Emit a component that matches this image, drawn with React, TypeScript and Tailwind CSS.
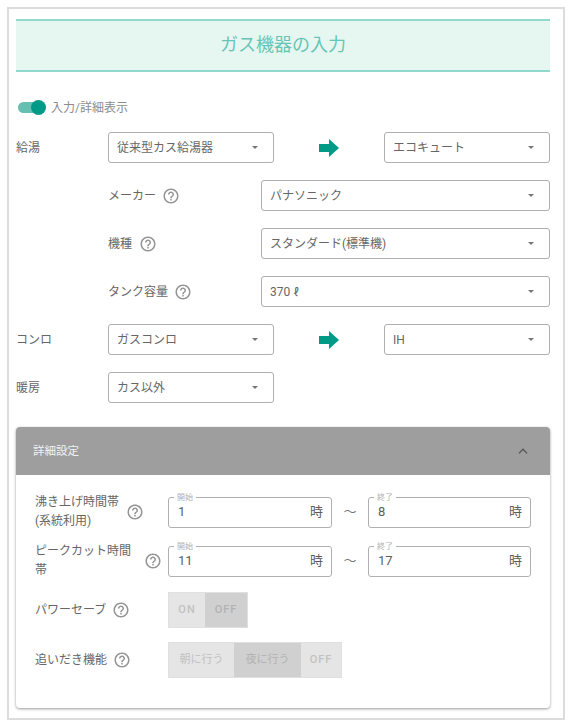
import React from "react";

const FONT = "font-['Roboto','Noto_Sans_CJK_JP',sans-serif]";

function Help() {
  return (
    <svg width="18" height="18" viewBox="0 0 24 24" className="ml-[1px] shrink-0" fill="#949494">
      <path d="M11 18h2v-2h-2v2zm1-16C6.48 2 2 6.48 2 12s4.48 10 10 10 10-4.48 10-10S17.52 2 12 2zm0 18c-4.41 0-8-3.59-8-8s3.59-8 8-8 8 3.59 8 8-3.59 8-8 8zm0-14c-2.21 0-4 1.79-4 4h2c0-1.1.9-2 2-2s2 .9 2 2c0 2-3 1.75-3 5h2c0-2.25 3-2.5 3-5 0-2.21-1.79-4-4-4z" />
    </svg>
  );
}

function Select({ value, className }: { value: string; className: string }) {
  return (
    <div className={`flex h-[31px] items-center justify-between rounded-[3px] border border-[#b0b0b0] bg-white pl-[8px] pr-[15px] text-[12px] text-[#666] ${className}`}>
      <span className="pt-[1px]">{value}</span>
      <span className="h-0 w-0 border-x-[3px] border-t-[3px] border-x-transparent border-t-[#777]" />
    </div>
  );
}

function Arrow() {
  return (
    <svg width="20" height="18" viewBox="0 0 20 18" className="ml-[45px] mr-[45px] shrink-0">
      <polygon points="0,5 10,5 10,0 20,9 10,18 10,13 0,13" fill="#009a87" />
    </svg>
  );
}

function SubRow({ label, value, gap }: { label: string; value: string; gap: string }) {
  return (
    <div className="mt-[17px] flex h-[31px] items-center pl-[92px] first:mt-[16px]">
      <div className="flex w-[153px] shrink-0 items-center text-[12px] text-[#666]">
        <span className={`pt-[1px] ${gap}`}>{label}</span>
        <Help />
      </div>
      <Select value={value} className="w-[289px]" />
    </div>
  );
}

function Field({ legend, value, className }: { legend: string; value: string; className: string }) {
  return (
    <div className={`relative flex h-[31px] items-center justify-between rounded-[3px] border border-[#b0b0b0] bg-white pl-[9px] pr-[8px] text-[13px] text-[#5c5c5c] ${className}`}>
      <span className="absolute left-[5px] top-[-5px] bg-white px-[3px] text-[8px] leading-[9px] text-[#b0b0b0]">{legend}</span>
      <span>{value}</span>
      <span>時</span>
    </div>
  );
}

function TimeRow({ label, width, gap, start, end, className }: { label: React.ReactNode; width: string; gap: string; start: string; end: string; className: string }) {
  return (
    <div className={`flex h-[40px] items-center ${className}`}>
      <div className="flex w-[133px] shrink-0 items-center text-[12px] leading-[19px] text-[#666]">
        <span className={`${width} ${gap}`}>{label}</span>
        <Help />
      </div>
      <Field legend="開始" value={start} className="w-[164px]" />
      <span className="w-[36px] text-center text-[13px] text-[#777]">～</span>
      <Field legend="終了" value={end} className="w-[163px]" />
    </div>
  );
}

function ToggleButton({ label, active, className }: { label: string; active?: boolean; className: string }) {
  return (
    <div className={`flex h-full items-center justify-center text-[11px] ${active ? "bg-[#d0d0d0] text-[#b2b2b2]" : "bg-[#e5e5e5] text-[#c2c2c2]"} ${className}`}>
      {label}
    </div>
  );
}

export default function App() {
  return (
    <div className={`h-[725px] w-[573px] overflow-hidden bg-white pl-[7px] pt-[7px] ${FONT}`}>
      <div className="h-[713px] w-[558px] border-2 border-[#dcdcdc] px-[7px] pt-[10px]">
        <div className="flex h-[53px] w-[534px] items-center justify-center border-y-2 border-[#8fdacd] bg-[#e6f6f1] pb-[3px] text-[18px] text-[#66c5b6]">
          ガス機器の入力
        </div>

        <div className="mt-[28px] flex h-[15px] items-center text-[12px] text-[#8c8c8c]">
          <div className="relative ml-[2px] h-[11px] w-[26px]">
            <div className="h-full w-[22px] rounded-full bg-[#66bfb1]" />
            <div className="absolute right-[-2px] top-[-2px] h-[15px] w-[15px] rounded-full bg-[#009a87]" />
          </div>
          <span className="ml-[7px]">入力/詳細表示</span>
        </div>

        <div className="mt-[17px] flex h-[31px] items-center text-[12px] text-[#666]">
          <span className="w-[92px] pt-[1px]">給湯</span>
          <Select value="従来型カス給湯器" className="w-[166px]" />
          <Arrow />
          <Select value="エコキュート" className="w-[166px]" />
        </div>

        <SubRow label="メーカー" value="パナソニック" gap="mr-[5px]" />
        <SubRow label="機種" value="スタンダード(標準機)" gap="mr-[6px]" />
        <SubRow label="タンク容量" value="370 ℓ" gap="mr-[5px]" />

        <div className="mt-[17px] flex h-[31px] items-center text-[12px] text-[#666]">
          <span className="w-[92px] pt-[1px]">コンロ</span>
          <Select value="ガスコンロ" className="w-[166px]" />
          <Arrow />
          <Select value="IH" className="w-[166px]" />
        </div>

        <div className="mt-[17px] flex h-[31px] items-center text-[12px] text-[#666]">
          <span className="w-[92px] pt-[1px]">暖房</span>
          <Select value="カス以外" className="w-[166px]" />
        </div>

        <div className="mt-[24px] h-[281px] w-[534px] rounded-[4px] bg-white shadow-[0_1px_3px_rgba(0,0,0,0.4)]">
          <div className="flex h-[48px] items-center justify-between rounded-t-[4px] bg-[#9e9e9e] pl-[17px] pr-[20px] text-[11.5px] text-[#f2f2f2]">
            <span className="pt-[1px]">詳細設定</span>
            <svg width="14" height="14" viewBox="0 0 24 24" fill="none" stroke="#555" strokeWidth="2.2">
              <polyline points="5,16 12,9 19,16" />
            </svg>
          </div>
          <div className="pl-[19px] pt-[17px]">
            <TimeRow label={<>沸き上げ時間帯<br />(系統利用)</>} width="w-[84px]" gap="mr-[6px]" start="1" end="8" className="" />
            <TimeRow label="ピークカット時間帯" width="w-[102px]" gap="mr-[6px]" start="11" end="17" className="mt-[9px]" />

            <div className="mt-[11px] flex h-[36px] items-center">
              <div className="flex w-[133px] shrink-0 items-center text-[12px] text-[#666]">
                <span className="mr-[5px]">パワーセーブ</span>
                <Help />
              </div>
              <div className="flex h-full border border-[#e0e0e0]">
                <ToggleButton label="ON" className="w-[36px] font-medium tracking-[1px]" />
                <ToggleButton label="OFF" active className="w-[42px] font-medium tracking-[1px]" />
              </div>
            </div>

            <div className="mt-[14px] flex h-[36px] items-center">
              <div className="flex w-[133px] shrink-0 items-center text-[12px] text-[#666]">
                <span className="mr-[5px]">追いだき機能</span>
                <Help />
              </div>
              <div className="flex h-full border border-[#e0e0e0]">
                <ToggleButton label="朝に行う" className="w-[65px]" />
                <ToggleButton label="夜に行う" active className="w-[67px]" />
                <ToggleButton label="OFF" className="w-[40px] font-medium tracking-[1px]" />
              </div>
            </div>
          </div>
        </div>
      </div>
    </div>
  );
}
